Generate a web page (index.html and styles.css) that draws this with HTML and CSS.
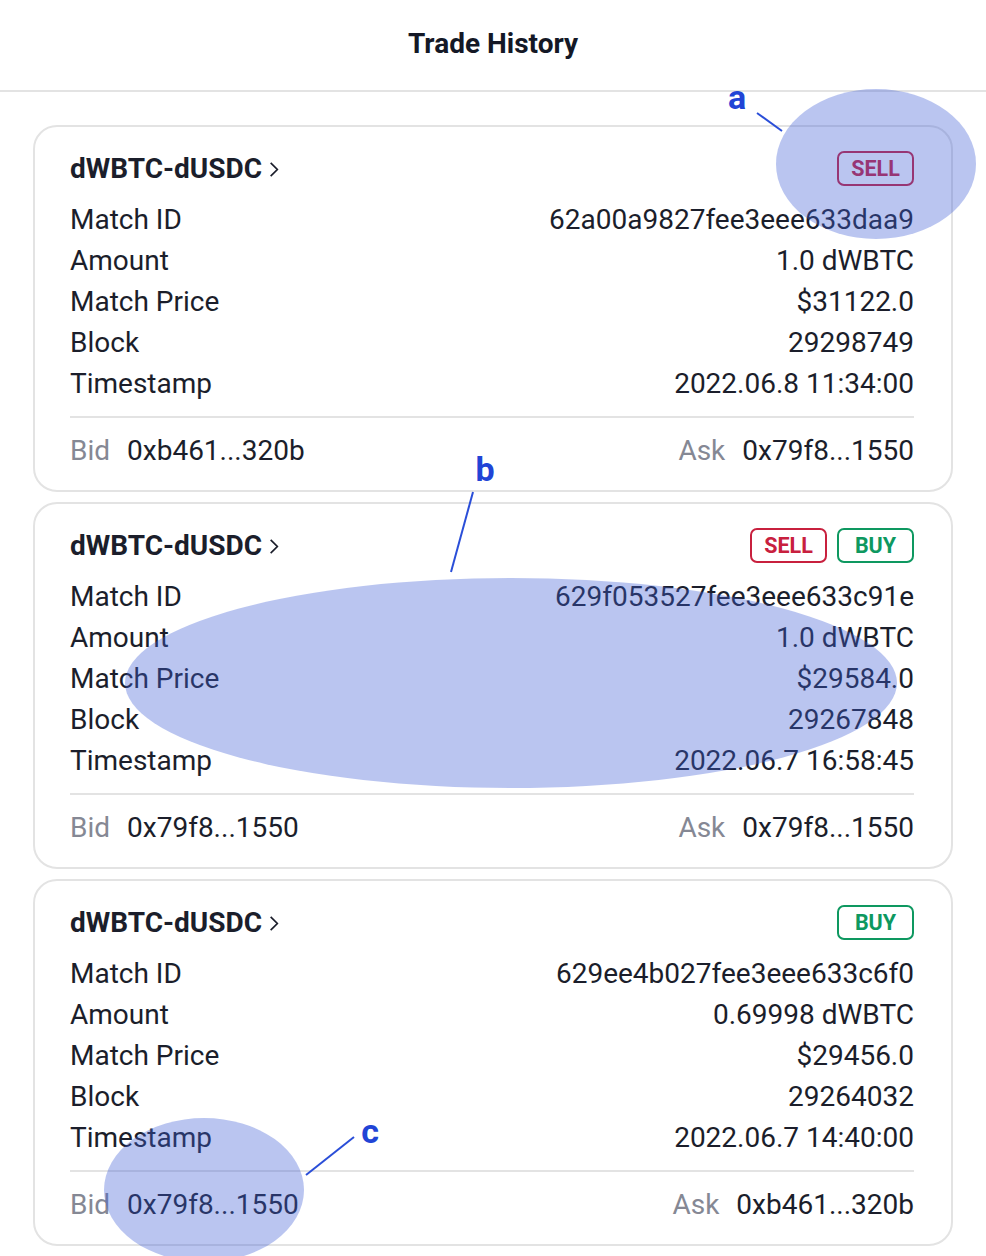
FILE: index.html
```html
<!DOCTYPE html>
<html>
<head>
<meta charset="utf-8">
<link rel="stylesheet" href="styles.css">
</head>
<body>
<div class="page">
  <header class="topbar"><h1>Trade History</h1></header>
  <main class="list">
    <section class="card">
      <div class="card-head">
        <div class="pair">dWBTC-dUSDC <svg class="chev" viewBox="0 0 12 20" width="12" height="20"><path d="M2 2 L10 10 L2 18" fill="none" stroke="#1b1e2b" stroke-width="2"/></svg></div>
        <div class="badges"><span class="badge sell">SELL</span></div>
      </div>
      <div class="rows">
        <div class="row"><span>Match ID</span><span>62a00a9827fee3eee633daa9</span></div>
        <div class="row"><span>Amount</span><span>1.0 dWBTC</span></div>
        <div class="row"><span>Match Price</span><span>$31122.0</span></div>
        <div class="row"><span>Block</span><span>29298749</span></div>
        <div class="row"><span>Timestamp</span><span>2022.06.8 11:34:00</span></div>
      </div>
      <div class="foot">
        <div class="party"><span class="lbl">Bid</span><span>0xb461...320b</span></div>
        <div class="party"><span class="lbl">Ask</span><span>0x79f8...1550</span></div>
      </div>
    </section>
    <section class="card">
      <div class="card-head">
        <div class="pair">dWBTC-dUSDC <svg class="chev" viewBox="0 0 12 20" width="12" height="20"><path d="M2 2 L10 10 L2 18" fill="none" stroke="#1b1e2b" stroke-width="2"/></svg></div>
        <div class="badges"><span class="badge sell">SELL</span><span class="badge buy">BUY</span></div>
      </div>
      <div class="rows">
        <div class="row"><span>Match ID</span><span>629f053527fee3eee633c91e</span></div>
        <div class="row"><span>Amount</span><span>1.0 dWBTC</span></div>
        <div class="row"><span>Match Price</span><span>$29584.0</span></div>
        <div class="row"><span>Block</span><span>29267848</span></div>
        <div class="row"><span>Timestamp</span><span>2022.06.7 16:58:45</span></div>
      </div>
      <div class="foot">
        <div class="party"><span class="lbl">Bid</span><span>0x79f8...1550</span></div>
        <div class="party"><span class="lbl">Ask</span><span>0x79f8...1550</span></div>
      </div>
    </section>
    <section class="card">
      <div class="card-head">
        <div class="pair">dWBTC-dUSDC <svg class="chev" viewBox="0 0 12 20" width="12" height="20"><path d="M2 2 L10 10 L2 18" fill="none" stroke="#1b1e2b" stroke-width="2"/></svg></div>
        <div class="badges"><span class="badge buy">BUY</span></div>
      </div>
      <div class="rows">
        <div class="row"><span>Match ID</span><span>629ee4b027fee3eee633c6f0</span></div>
        <div class="row"><span>Amount</span><span>0.69998 dWBTC</span></div>
        <div class="row"><span>Match Price</span><span>$29456.0</span></div>
        <div class="row"><span>Block</span><span>29264032</span></div>
        <div class="row"><span>Timestamp</span><span>2022.06.7 14:40:00</span></div>
      </div>
      <div class="foot">
        <div class="party"><span class="lbl">Bid</span><span>0x79f8...1550</span></div>
        <div class="party"><span class="lbl">Ask</span><span>0xb461...320b</span></div>
      </div>
    </section>
    <section class="card"></section>
  </main>
  <svg class="annot" width="986" height="1256" viewBox="0 0 986 1256">
    <g fill="#3f5fd6" fill-opacity="0.36">
      <ellipse cx="876" cy="164" rx="100" ry="75"/>
      <ellipse cx="511" cy="683" rx="386" ry="105"/>
      <ellipse cx="204" cy="1190" rx="100" ry="72"/>
    </g>
    <g stroke="#2a4ed8" stroke-width="2">
      <line x1="757" y1="113" x2="782" y2="131"/>
      <line x1="473" y1="492" x2="451" y2="572"/>
      <line x1="354" y1="1137" x2="306" y2="1175"/>
    </g>
    <g class="tag" fill="#2144d6">
      <text x="737" y="109" text-anchor="middle">a</text>
      <text x="485" y="481" text-anchor="middle">b</text>
      <text x="370" y="1143" text-anchor="middle">c</text>
    </g>
  </svg>
</div>
</body>
</html>
```

FILE: styles.css
```css
* { box-sizing: border-box; }
html, body { margin: 0; padding: 0; background: #fff; }
body {
  font-family: Roboto, "Liberation Sans", sans-serif;
  color: #1b1e2b;
  width: 986px;
  height: 1256px;
  overflow: hidden;
}
.page { position: relative; width: 986px; }
.topbar {
  height: 92px;
  border-bottom: 2px solid #e3e3e3;
  display: flex;
  align-items: center;
  justify-content: center;
}
.topbar h1 {
  margin: 0;
  font-size: 28px;
  font-weight: 700;
  color: #141826;
  padding-bottom: 3px;
}
.list {
  padding: 33px 33px 0;
  display: flex;
  flex-direction: column;
  gap: 10px;
}
.card {
  height: 367px;
  flex: none;
  border: 2px solid #e3e3e3;
  border-radius: 24px;
  padding: 23px 37px 0 35px;
}
.card-head {
  height: 36px;
  display: flex;
  align-items: center;
  justify-content: space-between;
}
.pair {
  font-size: 28px;
  font-weight: 700;
  display: flex;
  align-items: center;
  gap: 7px;
}
.chev { width: 10px; height: 17px; margin-top: 2px; }
.badges { display: flex; gap: 10px; }
.badge {
  height: 35px;
  min-width: 77px;
  padding: 0 12px;
  border: 2px solid;
  border-radius: 7px;
  font-size: 21.5px;
  font-weight: 700;
  display: flex;
  align-items: center;
  justify-content: center;
}
.badge.sell { color: #c8203e; border-color: #c8203e; }
.badge.buy { color: #0e9860; border-color: #0e9860; }
.rows { margin-top: 13px; }
.row {
  height: 41px;
  display: flex;
  align-items: center;
  justify-content: space-between;
  font-size: 28px;
}
.foot {
  margin-top: 12px;
  border-top: 2px solid #e3e3e3;
  height: 60px;
  display: flex;
  align-items: center;
  justify-content: space-between;
  font-size: 28px;
  padding-top: 6px;
}
.party { display: flex; gap: 17px; }
.lbl { color: #858894; }
.annot { position: absolute; top: 0; left: 0; pointer-events: none; }
.tag { font-family: Roboto, "Liberation Sans", sans-serif; font-weight: 700; font-size: 34px; }
```
